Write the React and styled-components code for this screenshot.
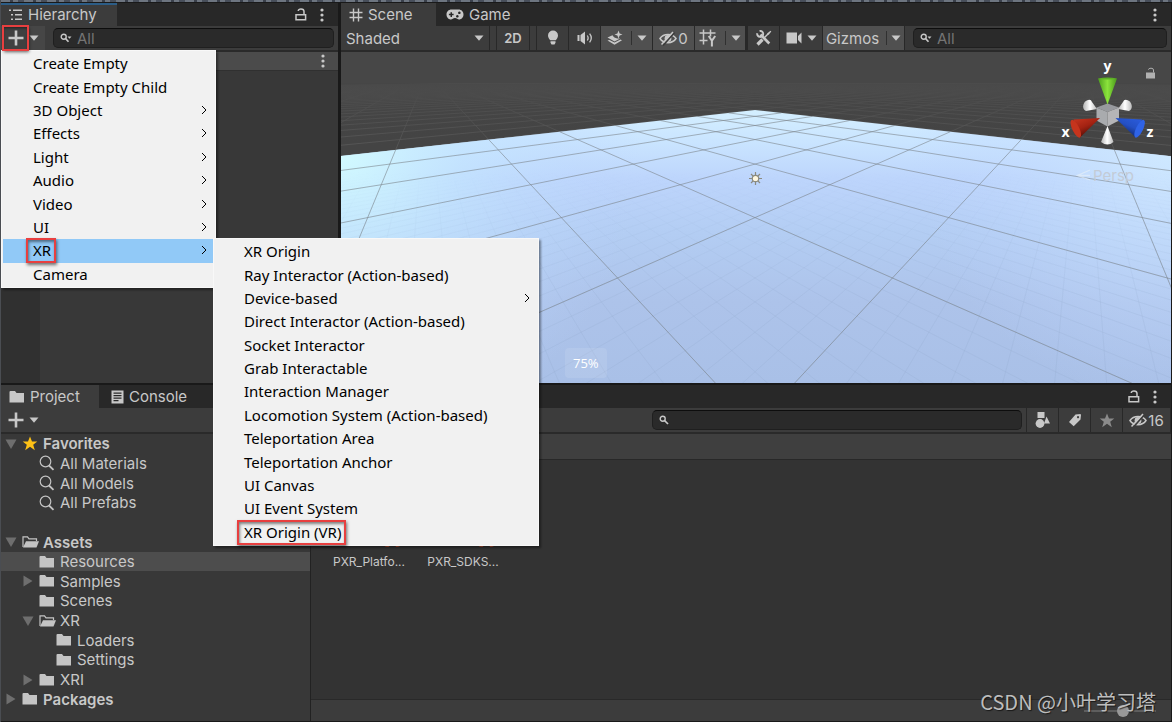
import React, { useState } from 'react'
import styled, { createGlobalStyle, css } from 'styled-components'

const createMenu = [
  { label: 'Create Empty' },
  { label: 'Create Empty Child' },
  { label: '3D Object', sub: true },
  { label: 'Effects', sub: true },
  { label: 'Light', sub: true },
  { label: 'Audio', sub: true },
  { label: 'Video', sub: true },
  { label: 'UI', sub: true },
  { label: 'XR', sub: true, active: true, marked: true },
  { label: 'Camera' },
]

const xrMenu = [
  { label: 'XR Origin' },
  { label: 'Ray Interactor (Action-based)' },
  { label: 'Device-based', sub: true },
  { label: 'Direct Interactor (Action-based)' },
  { label: 'Socket Interactor' },
  { label: 'Grab Interactable' },
  { label: 'Interaction Manager' },
  { label: 'Locomotion System (Action-based)' },
  { label: 'Teleportation Area' },
  { label: 'Teleportation Anchor' },
  { label: 'UI Canvas' },
  { label: 'UI Event System' },
  { label: 'XR Origin (VR)', marked: true },
]

const tree = [
  { label: 'Favorites', depth: 0, arrow: 'down', icon: 'star', bold: true },
  { label: 'All Materials', depth: 1, icon: 'lens' },
  { label: 'All Models', depth: 1, icon: 'lens' },
  { label: 'All Prefabs', depth: 1, icon: 'lens' },
  null,
  { label: 'Assets', depth: 0, arrow: 'down', icon: 'open', bold: true },
  { label: 'Resources', depth: 1, icon: 'folder', selected: true },
  { label: 'Samples', depth: 1, arrow: 'right', icon: 'folder' },
  { label: 'Scenes', depth: 1, icon: 'folder' },
  { label: 'XR', depth: 1, arrow: 'down', icon: 'open' },
  { label: 'Loaders', depth: 2, icon: 'folder' },
  { label: 'Settings', depth: 2, icon: 'folder' },
  { label: 'XRI', depth: 1, arrow: 'right', icon: 'folder' },
  { label: 'Packages', depth: 0, arrow: 'right', icon: 'folder', bold: true },
]

/* ---------- icons ---------- */

const Icon = ({ w = 16, h = 16, children }) => (
  <svg width={w} height={h} viewBox={`0 0 ${w} ${h}`} fill="currentColor" aria-hidden="true">
    {children}
  </svg>
)

const Caret = () => (
  <Icon w={10} h={6}>
    <path d="M0.5 0.5h9L5 5.8z" />
  </Icon>
)
const Dots = () => (
  <Icon w={4} h={14}>
    <circle cx="2" cy="2" r="1.6" />
    <circle cx="2" cy="7" r="1.6" />
    <circle cx="2" cy="12" r="1.6" />
  </Icon>
)
const Lock = () => (
  <Icon w={12} h={13}>
    <path d="M1 6.7h9.6v5H1zM9 6.5V3.6C9 1.900 7.900 1 6 1 4.400 1 3.400 1.700 3.200 3" fill="none" stroke="currentColor" strokeWidth="1.500" />
  </Icon>
)
const PlusIcon = () => (
  <Icon w={16} h={16}>
    <path d="M6.700 0.500h2.600v6.200h6.200v2.600H9.300v6.200H6.700V9.300H0.500V6.700h6.200z" />
  </Icon>
)
const ListIcon = () => (
  <Icon w={14} h={12}>
    <path d="M0 0.500h2v1.500H0zM4 0.500h9v1.500H4zM2 5h2v1.500H2zM6 5h7v1.500H6zM2 9.500h2V11H2zM6 9.500h7V11H6z" />
  </Icon>
)
const HashIcon = () => (
  <Icon w={14} h={14}>
    <path d="M4.500 0.500v13M9.500 0.500v13M0.500 4.500h13M0.500 9.500h13" stroke="currentColor" strokeWidth="1.400" />
  </Icon>
)
const PadIcon = () => (
  <Icon w={18} h={11}>
    <path fillRule="evenodd" d="M5.500 0.500h7C15.500 0.500 17.500 2.800 17.500 5.500S15.500 10.500 13 10.500c-1.300 0-2.200-1.500-4-1.500s-2.700 1.500-4 1.500C2.500 10.500 0.500 8.200 0.500 5.500S2.500 0.500 5.500 0.500zM4.500 3.200v1.600H2.900v1.500h1.600v1.600h1.500V6.300h1.600V4.800H6V3.200zM13.300 2.500a1.300 1.300 0 1 0 .1 0zM11.300 6a1.300 1.300 0 1 0 .1 0z" />
  </Icon>
)
const SearchDrop = () => (
  <Icon w={12} h={10}>
    <circle cx="3.700" cy="3.700" r="2.500" fill="none" stroke="currentColor" strokeWidth="1.400" />
    <path d="M5.500 5.500L8.500 8.800" stroke="currentColor" strokeWidth="1.700" />
    <path d="M7.500 3.500h4L9.500 5.800z" />
  </Icon>
)
const SearchIcon = () => (
  <Icon w={10} h={10}>
    <circle cx="3.700" cy="3.700" r="2.500" fill="none" stroke="currentColor" strokeWidth="1.400" />
    <path d="M5.500 5.500L9 9" stroke="currentColor" strokeWidth="1.700" />
  </Icon>
)
const BulbIcon = () => (
  <Icon w={12} h={16}>
    <path d="M6 0.500a5 5 0 0 1 5 5c0 2-1 3.200-2.300 4.800H3.300C2 8.700 1 7.500 1 5.500a5 5 0 0 1 5-5zM3.500 11.300h5v1.500l-1 1.700h-3l-1-1.700z" />
  </Icon>
)
const SoundIcon = () => (
  <Icon w={16} h={14}>
    <path d="M0.500 4h2v6h-2zM3.500 4l4.500-3.500v13L3.500 10z" />
    <path d="M10.300 4.500c1 1.500 1 3.500 0 5M12.600 2.700c2 2.500 2 6 0 8.600" fill="none" stroke="currentColor" strokeWidth="1.300" />
  </Icon>
)
const LayersIcon = () => (
  <Icon w={16} h={16}>
    <path d="M0.500 7.500l5-2.300c1 2 2.500 2.800 4.700 3.200l3 .2-5.700 2.900zM0.500 10.500l2-.5 5 2.500 6-3 1.500.8-7.500 4.500z" />
    <path d="M11.500 0.500l1.100 2.900 2.900 1.100-2.900 1.100-1.100 2.900-1.100-2.900-2.900-1.100 2.900-1.100z" />
  </Icon>
)
const EyeOff = () => (
  <Icon w={18} h={15}>
    <path d="M1 7.500C4.500 2 13.500 2 17 7.500 13.500 13 4.500 13 1 7.500z" fill="none" stroke="currentColor" strokeWidth="1.500" />
    <circle cx="9" cy="7.500" r="3.400" />
    <path d="M4 14.500L15.500 1.500" stroke="#3c3c3c" strokeWidth="1.800" />
    <path d="M2.500 13.500L14 1" stroke="currentColor" strokeWidth="1.500" />
  </Icon>
)
const SnapIcon = () => (
  <Icon w={18} h={18}>
    <path d="M4.500 0.500v15M11.500 0.500v7M0.500 4h16M0.500 11.500h8" stroke="currentColor" strokeWidth="1.500" fill="none" />
    <path d="M9.700 7l3.200 4.800L16.200 7M12.900 11v6.500" stroke="currentColor" strokeWidth="2" fill="none" />
  </Icon>
)
const ToolsIcon = () => (
  <Icon w={16} h={16}>
    <path d="M4.500 4.500L13.300 13.500" stroke="currentColor" strokeWidth="2.600" />
    <path d="M1.300 3.200a3 3 0 1 0 2.300-2.200" stroke="currentColor" strokeWidth="1.900" fill="none" />
    <path d="M1.500 14.500L6.500 9.500" stroke="currentColor" strokeWidth="3.200" />
    <path d="M8.500 7.500L12 4" stroke="currentColor" strokeWidth="1.500" />
    <path d="M11 3.500L14.500 0.700l.8.800-2.800 3.500z" />
  </Icon>
)
const CameraIcon = () => (
  <Icon w={16} h={12}>
    <path d="M0.500 0.500H11v11H0.500zM12 4l3.500-3.500v11L12 8z" />
  </Icon>
)
const DocIcon = () => (
  <Icon w={13} h={14}>
    <path fillRule="evenodd" d="M0.500 0.500h12v13h-12zM2.500 2.500v1.300h8V2.500zM2.500 5v1.300h8V5zM2.500 7.500v1.300h8V7.500zM2.500 10v1.300h5V10z" />
  </Icon>
)
const ShapesIcon = () => (
  <Icon w={16} h={16}>
    <path d="M2.500 0h7v6h-7zM11.500 4.500L15 11.500H9z" />
    <circle cx="5" cy="11.500" r="4.400" />
  </Icon>
)
const TagIcon = () => (
  <Icon w={14} h={14}>
    <path fillRule="evenodd" d="M1 9l6.500-7.500L12.500 1l.5 1-.500 4.500-6.800 6.700zM10 3a1.100 1.100 0 1 0 .1 0z" />
  </Icon>
)
const StarIcon = () => (
  <Icon w={16} h={15}>
    <path d="M8 0.500l2 5h5.300L11.200 8.700l1.600 5.500-4.800-3.400L3.200 14.200l1.600-5.500L0.700 5.500H6z" />
  </Icon>
)
const LensIcon = () => (
  <Icon w={16} h={16}>
    <circle cx="6.500" cy="6.500" r="5.300" fill="none" stroke="currentColor" strokeWidth="1.200" />
    <path d="M10 10.500L14.500 14.800" stroke="currentColor" strokeWidth="1.800" />
  </Icon>
)
const FolderIcon = () => (
  <Icon w={16} h={12}>
    <path d="M0.500 1Q0.500 0 1.500 0H6l1.500 2H15v9.500H0.500z" />
  </Icon>
)
const FolderOpen = () => (
  <Icon w={17} h={12}>
    <path d="M1 11V0.800h4.500l1.500 2h7.500V5" fill="none" stroke="currentColor" strokeWidth="1.200" />
    <path d="M4 5.200h13l-2.500 6.300H1z" />
  </Icon>
)
const Fold = ({ dir }) => (
  <Icon w={12} h={12}>{dir === 'down' ? <path d="M0.500 1.500h11L6 11z" /> : <path d="M1.500 0.500L10.500 6 1.500 11.500z" />}</Icon>
)
const Chevron = () => (
  <Icon w={6} h={10}>
    <path d="M1 1l4 4-4 4" fill="none" stroke="currentColor" />
  </Icon>
)
const treeIcons = { star: StarIcon, lens: LensIcon, open: FolderOpen, folder: FolderIcon }

const AssetIcon = () => (
  <svg width="66" height="66" viewBox="0 0 66 66" aria-hidden="true">
    <path d="M33 4l26 14v28L33 60 7 46V18z" fill="#6f9fc4" />
    <path d="M33 32l26-14v28L33 60z" fill="#4d7da3" />
    <path d="M53 44q-5 0-5 6t-3 6q3 0 3 4t5 3M60 44q5 0 5 6t1 6q-2 0-2 4t-4 3" fill="none" stroke="#d9532c" strokeWidth="3" />
  </svg>
)

/* ---------- scene drawing ---------- */

const HORIZON = 73
// projects a ground grid point to the view
const project = (a, b) => {
  const depth = 0.00694 + 0.00205 * (a + b)
  return [755 + (0.672 * (a - b)) / depth, HORIZON + 1 / depth]
}
const nearest = (a) => (0.0028 - 0.00694) / 0.00205 - a
const line = (a, far) => {
  const [x1, y1] = project(a, nearest(a))
  const [x2, y2] = project(a, far)
  return `M${x1} ${y1}L${x2} ${y2}M${1510 - x1} ${y1}L${1510 - x2} ${y2}`
}
const range = (from, to, step) => {
  const list = []
  for (let i = from; i <= to + 0.001; i += step) list.push(i)
  return list
}
const farLines = range(-30, 45, 1).map((a) => line(a, 45)).join('')
const majorLines = range(-7, 4, 1).map((a) => line(a, 5)).join('')
const minorLines = range(-7, 4, 0.125).map((a) => line(a, 5)).join('')
const corner = project(5, 5)
const side = project(5, nearest(5))
const planePath = `M${corner}L${side}L${1510 - side[0]} ${side[1]}Z`

const Ground = () => (
  <StGround viewBox="341 51 830 332" preserveAspectRatio="xMidYMid slice" aria-hidden="true">
    <defs>
      <linearGradient id="sky" x1="0" y1="76" x2="0" y2="150" gradientUnits="userSpaceOnUse">
        <stop offset="0" stopColor="#474747" />
        <stop offset="0.150" stopColor="#474747" stopOpacity="0.800" />
        <stop offset="1" stopColor="#444" stopOpacity="0" />
      </linearGradient>
      <linearGradient id="plane" x1="0" y1="110" x2="0" y2="383" gradientUnits="userSpaceOnUse">
        <stop offset="0" stopColor="#d4efff" />
        <stop offset="0.120" stopColor="#c9e4ff" />
        <stop offset="0.250" stopColor="#bdd5fc" />
        <stop offset="0.450" stopColor="#b3cdf3" />
        <stop offset="0.700" stopColor="#adc3ea" />
        <stop offset="1" stopColor="#a9c0e7" />
      </linearGradient>
      <radialGradient id="glowLeft" cx="341" cy="150" r="300" gradientUnits="userSpaceOnUse">
        <stop offset="0" stopColor="#d2fbff" />
        <stop offset="0.400" stopColor="#c4e6ff" stopOpacity="0.700" />
        <stop offset="1" stopColor="#bcd5ff" stopOpacity="0" />
      </radialGradient>
      <radialGradient id="glowRight" cx="1171" cy="140" r="260" gradientUnits="userSpaceOnUse">
        <stop offset="0" stopColor="#d0eaff" />
        <stop offset="1" stopColor="#bcd3ff" stopOpacity="0" />
      </radialGradient>
      <linearGradient id="fadeTop" x1="0" y1="170" x2="0" y2="300" gradientUnits="userSpaceOnUse">
        <stop offset="0" stopColor="#fff" stopOpacity="0" />
        <stop offset="1" stopColor="#fff" />
      </linearGradient>
      <mask id="nearOnly" maskUnits="userSpaceOnUse" x="300" y="50" width="920" height="340">
        <rect x="300" y="50" width="920" height="340" fill="url(#fadeTop)" />
      </mask>
    </defs>
    <rect x="300" y="0" width="920" height="440" fill="#444" />
    <path d={farLines} stroke="#5a5a5a" strokeWidth="0.800" fill="none" />
    <rect x="300" y="0" width="920" height="83" fill="#474747" />
    <rect x="300" y="83" width="920" height="97" fill="url(#sky)" />
    <path d={planePath} fill="url(#plane)" />
    <path d={planePath} fill="url(#glowLeft)" />
    <path d={planePath} fill="url(#glowRight)" />
    <path d={minorLines} stroke="#8294b4" strokeOpacity="0.180" strokeWidth="0.700" fill="none" mask="url(#nearOnly)" />
    <path d={majorLines} stroke="#7d858c" strokeOpacity="0.600" strokeWidth="1" fill="none" />
    <g stroke="#8b8b80" strokeWidth="1.200">
      <path d="M755.500 171.500v13M749 178h13M751 173.500l9 9M760 173.500l-9 9" />
      <circle cx="755.500" cy="178" r="3.200" fill="#fff7df" />
    </g>
  </StGround>
)

const Gizmo = () => (
  <StGizmo width="112" height="140" viewBox="1060 52 112 140" aria-label="Scene orientation">
    <defs>
      <linearGradient id="green">
        <stop offset="0" stopColor="#4d9f1d" />
        <stop offset="0.500" stopColor="#8be23c" />
        <stop offset="1" stopColor="#4a991c" />
      </linearGradient>
      <linearGradient id="white">
        <stop offset="0" stopColor="#b4b4b4" />
        <stop offset="0.500" stopColor="#fff" />
        <stop offset="1" stopColor="#b9b9b9" />
      </linearGradient>
      <linearGradient id="red" x1="0" y1="0" x2="0.600" y2="1">
        <stop offset="0" stopColor="#c93620" />
        <stop offset="0.500" stopColor="#a32212" />
        <stop offset="1" stopColor="#3c0a05" />
      </linearGradient>
      <linearGradient id="blue" x1="1" y1="0" x2="0.400" y2="1">
        <stop offset="0" stopColor="#2b5de0" />
        <stop offset="0.500" stopColor="#2450c4" />
        <stop offset="1" stopColor="#0c1c55" />
      </linearGradient>
    </defs>
    <path d="M1098 109l-11 2c-5-2-3-10 2-11q3-1 4 2z" fill="url(#white)" />
    <path d="M1119 109l11 2c5-2 3-10-2-11q-3-1-4 2z" fill="url(#white)" />
    <path d="M1108.500 103.500l11.500 4-11.500 4.500-11-4.500z" fill="#989a9e" />
    <path d="M1097.500 107.500l11 4.500v14.500l-11-6z" fill="#a9abae" />
    <path d="M1120 107.500l-11.500 4.500v14.500l11.500-6z" fill="#b5b5b7" />
    <path d="M1099 78.500h19l-9.500 26z" fill="url(#green)" />
    <path d="M1099 78.500q9.500-2 19 0-9.500 2-19 0z" fill="#5db125" />
    <path d="M1101 118l-26.500 1.500 6.500 18z" fill="url(#red)" />
    <ellipse cx="1076.800" cy="128.700" rx="3.500" ry="9.800" transform="rotate(-26 1076.800 128.700)" fill="#c5341d" />
    <path d="M1116.500 118l26.500 1.500-6.500 18z" fill="url(#blue)" />
    <ellipse cx="1140.600" cy="128.700" rx="3.500" ry="9.800" transform="rotate(26 1140.600 128.700)" fill="#2f63e6" />
    <path d="M1108.500 126l6 16q-6 5-12.500 0z" fill="url(#white)" />
    <g fill="#fff" fontFamily="'Open Sans', sans-serif" fontSize="14" fontWeight="700" textAnchor="middle">
      <text x="1108.500" y="71">y</text>
      <text x="1066.500" y="137">x</text>
      <text x="1151" y="137">z</text>
    </g>
    <path d="M1147 72.500h9v6h-9z" fill="#b0b0b0" />
    <path d="M1154.500 72.500v-2.500q0-1.800-2.500-1.800t-2.500 1.500" fill="none" stroke="#b0b0b0" />
    <path d="M1091 170l-12.500 5.500 12.500 4.500M1079 175.500h12" fill="none" stroke="#e4eef8" strokeOpacity="0.700" strokeWidth="1.300" />
    <text x="1094" y="181" fill="#c3cbd6" fontFamily="Inter, sans-serif" fontSize="15">
      Persp
    </text>
  </StGizmo>
)

/* ---------- parts ---------- */

const Menu = ({ items, label, ...rest }) => (
  <StMenu role="menu" aria-label={label} {...rest}>
    {items.map((item) => (
      <StMenuItem key={item.label} type="button" role="menuitem" $active={item.active}>
        {item.marked ? <StMarked>{item.label}</StMarked> : item.label}
        {item.sub && <Chevron />}
      </StMenuItem>
    ))}
  </StMenu>
)

const App = () => {
  const [zoom, setZoom] = useState(55)
  const [query, setQuery] = useState('')

  return (
    <>
      <GlobalStyle />
      <StWindow>
        <StBackStrip />
        <StTop>
          <StPanel>
            <StTabBar>
              <StTab type="button" $active $focused $w={116}>
                <ListIcon />
                Hierarchy
              </StTab>
              <StTabTools>
                <StPlain type="button" aria-label="Lock"><Lock /></StPlain>
                <StPlain type="button" aria-label="Options"><Dots /></StPlain>
              </StTabTools>
            </StTabBar>
            <StToolbar>
              <StCreate type="button" aria-label="Create" $open>
                <StPlusBox><PlusIcon /></StPlusBox>
                <Caret />
              </StCreate>
              <StSearch $gap={5}>
                <SearchDrop />
                <input type="text" placeholder="All" aria-label="Search hierarchy" />
              </StSearch>
            </StToolbar>
            <StHierarchy>
              <StSceneRow>
                <StPlain type="button" aria-label="Scene options"><Dots /></StPlain>
              </StSceneRow>
              <StGutter />
            </StHierarchy>
          </StPanel>

          <StPanel>
            <StTabBar>
              <StTab type="button" $active $w={95}><HashIcon />Scene</StTab>
              <StTab type="button" $w={84} $pad={10}><PadIcon />Game</StTab>
              <StTabTools>
                <StPlain type="button" aria-label="Options"><Dots /></StPlain>
              </StTabTools>
            </StTabBar>
            <StToolbar>
              <StShading>
                <select aria-label="Draw mode" defaultValue="Shaded">
                  <option>Shaded</option>
                </select>
                <Caret />
              </StShading>
              <StSpacer />
              <StTool type="button" $w={33} $bold>2D</StTool>
              <StSpacer />
              <StTool type="button" $w={32} aria-label="Lighting"><BulbIcon /></StTool>
              <StTool type="button" $w={32} aria-label="Audio"><SoundIcon /></StTool>
              <StTool type="button" $w={52} $on aria-label="Effects"><LayersIcon /><StBar /><Caret /></StTool>
              <StTool type="button" $w={42} $on $tight aria-label="Hidden objects"><EyeOff />0</StTool>
              <StTool type="button" $w={51} $on aria-label="Grid"><SnapIcon /><StBar /><Caret /></StTool>
              <StThin />
              <StTool type="button" $w={32} aria-label="Component tools"><ToolsIcon /></StTool>
              <StTool type="button" $w={43} aria-label="Camera"><CameraIcon /><Caret /></StTool>
              <StTool type="button" $w={82} $on $snug>Gizmos<StBar /><Caret /></StTool>
              <StSearch $gap={5}>
                <SearchDrop />
                <input type="text" placeholder="All" aria-label="Search scene" />
              </StSearch>
            </StToolbar>
            <StScene>
              <Ground />
              <Gizmo />
              <StZoomBadge>75%</StZoomBadge>
            </StScene>
          </StPanel>
        </StTop>

        <StPanel>
          <StTabBar>
            <StTab type="button" $active $w={98}><FolderIcon />Project</StTab>
            <StTab type="button" $w={100} $pad={12}><DocIcon />Console</StTab>
            <StTabTools>
              <StPlain type="button" aria-label="Lock"><Lock /></StPlain>
              <StPlain type="button" aria-label="Options"><Dots /></StPlain>
            </StTabTools>
          </StTabBar>
          <StToolbar>
            <StCreate type="button" aria-label="Create asset">
              <StIconBox><PlusIcon /></StIconBox>
              <Caret />
            </StCreate>
            <StFill />
            <StSearch $w={370} $gap={8}>
              <SearchIcon />
              <input type="text" value={query} onChange={(e) => setQuery(e.target.value)} aria-label="Search project" />
            </StSearch>
            <StTool type="button" $w={33} $first aria-label="Search by type"><ShapesIcon /></StTool>
            <StTool type="button" $w={32} aria-label="Search by label"><TagIcon /></StTool>
            <StTool type="button" $w={32} $dim aria-label="Save search"><StarIcon /></StTool>
            <StTool type="button" $w={48} $tight aria-label="Hidden packages"><EyeOff />16</StTool>
          </StToolbar>
          <StProject>
            <StTree>
              {tree.map((node, i) => {
                if (!node) return <li key={i} />
                const NodeIcon = treeIcons[node.icon]
                return (
                  <StNode key={node.label} $depth={node.depth} $bold={node.bold} $selected={node.selected}>
                    <StFold>{node.arrow && <Fold dir={node.arrow} />}</StFold>
                    <StNodeIcon $gold={node.icon === 'star'}><NodeIcon /></StNodeIcon>
                    {node.label}
                  </StNode>
                )
              })}
            </StTree>
            <StContent>
              <StCrumbs />
              <StAssets>
                <StAsset><AssetIcon />PXR_Platfo...</StAsset>
                <StAsset><AssetIcon />PXR_SDKS...</StAsset>
              </StAssets>
              <StFooter>
                <StSlider type="range" min="0" max="100" value={zoom} onChange={(e) => setZoom(e.target.value)} aria-label="Icon size" />
              </StFooter>
            </StContent>
          </StProject>
        </StPanel>

        <StCreateMenu items={createMenu} label="Create" />
        <StXrMenu items={xrMenu} label="XR" />
        <StWatermark>CSDN @小叶学习塔</StWatermark>
      </StWindow>
    </>
  )
}

export default App

const GlobalStyle = createGlobalStyle`
  * {
    box-sizing: border-box;
  }
  body {
    margin: 0;
    background: #191919;
    color: #c8c8c8;
    font-family: Inter, sans-serif;
    font-size: 15px;
  }
  button, input, select {
    font: inherit;
    color: inherit;
    border: none;
    background: none;
    padding: 0;
    margin: 0;
  }
  svg {
    display: block;
    flex: none;
  }
`

const StWindow = styled.div`
  position: relative;
  min-height: 100vh;
  display: grid;
  grid-template-rows: 2px minmax(381px, 381fr) minmax(337px, 337fr);
  row-gap: 1px;
  border-left: 1px solid #4a4d52;
  overflow: hidden;
`

const StBackStrip = styled.div`
  background: repeating-linear-gradient(90deg, #6d7580 0 9px, #3a404b 9px 12px, #6d7580 12px 17px, #484f5b 17px 23px);
`

const StTop = styled.div`
  display: grid;
  grid-template-columns: 338px 1fr;
  column-gap: 2px;
`

const StPanel = styled.section`
  display: flex;
  flex-direction: column;
  min-width: 0;
  padding: 0 1px 1px 0;
`

const StTabBar = styled.div`
  display: flex;
  height: 23px;
  flex: none;
  background: #282828;
`

const StTab = styled.button`
  display: flex;
  align-items: center;
  gap: 5px;
  width: ${({ $w }) => $w}px;
  padding-left: ${({ $pad = 8 }) => $pad}px;
  white-space: nowrap;
  background: ${({ $active }) => ($active ? '#3c3c3c' : 'none')};
  ${({ $focused }) => $focused && css`
    box-shadow: inset 0 2px 0 #2c5d87;
  `}
`

const StTabTools = styled.div`
  display: flex;
  align-items: center;
  gap: 13px;
  margin-left: auto;
  padding-right: 14px;
`

const StPlain = styled.button`
  display: flex;
  align-items: center;
`

const StToolbar = styled.div`
  display: flex;
  height: 26px;
  flex: none;
  background: #3c3c3c;
  border-bottom: 2px solid #2a2a2a;
`

const StCreate = styled.button`
  display: flex;
  align-items: center;
  width: 44px;
  padding-left: 2px;
  gap: 1px;
  background: ${({ $open }) => ($open ? '#464646' : 'none')};
`

const StIconBox = styled.span`
  width: 25px;
  height: 24px;
  display: flex;
  align-items: center;
  justify-content: center;
`

const StPlusBox = styled(StIconBox)`
  position: relative;
  z-index: 3;
  outline: 2px solid #e83f3f;
  outline-offset: -1px;
  background: #404040;
  box-shadow: 1px 2px 3px #0009, inset 0 2px 3px #0007;
`

const StSearch = styled.label`
  display: flex;
  align-items: center;
  gap: ${({ $gap }) => $gap}px;
  flex: ${({ $w }) => ($w ? 'none' : '1')};
  width: ${({ $w }) => ($w ? `${$w}px` : 'auto')};
  min-width: 0;
  height: 20px;
  margin: 2px 4px 0 8px;
  padding: 0 6px;
  border: 1px solid #1f1f1f;
  border-top-color: #0d0d0d;
  border-radius: 5px;
  background: #2a2a2a;

  input {
    flex: 1;
    min-width: 0;
    outline: none;
  }
  input::placeholder {
    color: #747474;
    opacity: 1;
  }
`

const StTool = styled.button`
  display: flex;
  align-items: center;
  justify-content: center;
  gap: ${({ $tight, $snug }) => ($tight ? 1 : $snug ? 4 : 5)}px;
  width: ${({ $w }) => $w}px;
  flex: none;
  font-size: ${({ $bold }) => ($bold ? 13 : 15)}px;
  font-weight: ${({ $bold }) => ($bold ? 600 : 400)};
  color: ${({ $dim }) => ($dim ? '#8b8b8b' : '#c8c8c8')};
  background: ${({ $on }) => ($on ? '#505050' : '#3c3c3c')};
  border-right: 1px solid #282828;
  ${({ $first }) => $first && css`
    border-left: 1px solid #282828;
  `}
`

const StBar = styled.span`
  width: 1px;
  height: 14px;
  margin-left: 3px;
  background: #303030;
`

const StShading = styled.div`
  display: flex;
  align-items: center;
  width: 149px;
  flex: none;
  padding: 0 5px 0 5px;
  border-right: 1px solid #282828;

  select {
    flex: 1;
    appearance: none;
    outline: none;
  }
`

const StSpacer = styled.span`
  width: 7px;
  flex: none;
  border-right: 1px solid #282828;
`

const StThin = styled.span`
  width: 2px;
  flex: none;
  background: #282828;
`

const StFill = styled.span`
  flex: 1;
`

const StHierarchy = styled.div`
  flex: 1;
  display: flex;
  flex-direction: column;
  background: #383838;
`

const StSceneRow = styled.div`
  display: flex;
  justify-content: flex-end;
  align-items: center;
  height: 19px;
  padding-right: 13px;
  background: #4b4b4b;
  border-bottom: 1px solid #303030;
`

const StGutter = styled.div`
  flex: 1;
  width: 39px;
  background: #303030;
`

const StScene = styled.div`
  position: relative;
  flex: 1;
  overflow: hidden;
`

const StGround = styled.svg`
  position: absolute;
  inset: 0;
  width: 100%;
  height: 100%;
`

const StGizmo = styled.svg`
  position: absolute;
  top: 0;
  right: 0;
`

const StZoomBadge = styled.span`
  position: absolute;
  left: 224px;
  bottom: 5px;
  padding: 5px 8px;
  border-radius: 4px;
  background: rgba(255, 255, 255, 0.1);
  color: #fff;
  font-family: 'Open Sans', sans-serif;
  font-size: 13px;
  line-height: 20px;
`

const StProject = styled.div`
  flex: 1;
  display: grid;
  grid-template-columns: 310px 1fr;
`

const StTree = styled.ul`
  display: grid;
  grid-auto-rows: 1fr;
  align-self: stretch;
  margin: 0;
  padding: 0 0 12px;
  list-style: none;
  background: #383838;
  border-right: 1px solid #222;
`

const StNode = styled.li`
  display: flex;
  align-items: center;
  padding-left: ${({ $depth }) => 4 + $depth * 17}px;
  font-weight: ${({ $bold }) => ($bold ? 600 : 400)};
  background: ${({ $selected }) => ($selected ? '#4d4d4d' : 'none')};
`

const StFold = styled.span`
  width: 17px;
  color: #6e6e6e;
`

const StNodeIcon = styled.span`
  display: flex;
  width: 21px;
  color: ${({ $gold }) => ($gold ? '#fdc116' : '#c4c4c4')};
`

const StContent = styled.div`
  display: flex;
  flex-direction: column;
  min-width: 0;
  background: #333;
`

const StCrumbs = styled.div`
  height: 26px;
  background: #3f3f3f;
  border-bottom: 1px solid #282828;
`

const StAssets = styled.div`
  flex: 1;
  display: flex;
  padding: 22px 11px;
`

const StAsset = styled.figure`
  display: flex;
  flex-direction: column;
  align-items: center;
  gap: 5px;
  width: 94px;
  margin: 0;
  font-size: 12px;
  line-height: 18px;
`

const StFooter = styled.div`
  display: flex;
  justify-content: flex-end;
  align-items: center;
  height: 22px;
  padding-right: 15px;
  background: #3c3c3c;
  border-top: 1px solid #292929;
`

const StSlider = styled.input`
  appearance: none;
  width: 72px;
  height: 12px;

  &::-webkit-slider-runnable-track {
    height: 2px;
    background: #5e5e5e;
  }
  &::-webkit-slider-thumb {
    appearance: none;
    width: 12px;
    height: 12px;
    margin-top: -5px;
    border-radius: 50%;
    background: #999;
  }
`

const StMenu = styled.div`
  position: absolute;
  display: grid;
  grid-auto-rows: 1fr;
  padding: 1px;
  background: #f1f1f1;
  border: 1px solid #f8f8f8;
  box-shadow: 2px 2px 2px #0006;
  color: #000;
  font-family: 'Noto Sans', sans-serif;
  font-size: 15px;
`

const StCreateMenu = styled(Menu)`
  top: 50px;
  left: 0;
  width: 215px;
  height: 238px;

  button {
    padding: 0 7px 1px 30px;
  }
`

const StXrMenu = styled(Menu)`
  top: 238px;
  left: 212px;
  width: 326px;
  height: 308px;

  button {
    padding: 0 7px 1px 29px;
  }
`

const StMenuItem = styled.button`
  display: flex;
  align-items: center;
  justify-content: space-between;
  text-align: left;
  background: ${({ $active }) => ($active ? '#91c9f7' : 'none')};
`

const StMarked = styled.span`
  position: relative;

  &::after {
    content: '';
    position: absolute;
    inset: -2px -5px -3px -7px;
    border: 2px solid #e83f3f;
    box-shadow: 1px 2px 3px #0008, inset 1px 2px 3px #0007;
  }
`

const StWatermark = styled.span`
  position: absolute;
  right: 16px;
  bottom: 6px;
  color: #bdbdbd;
  font-family: 'Noto Sans CJK SC', sans-serif;
  font-size: 20px;
  line-height: 28px;
  text-shadow: 1px 1px 1px #0009;
  pointer-events: none;
`
